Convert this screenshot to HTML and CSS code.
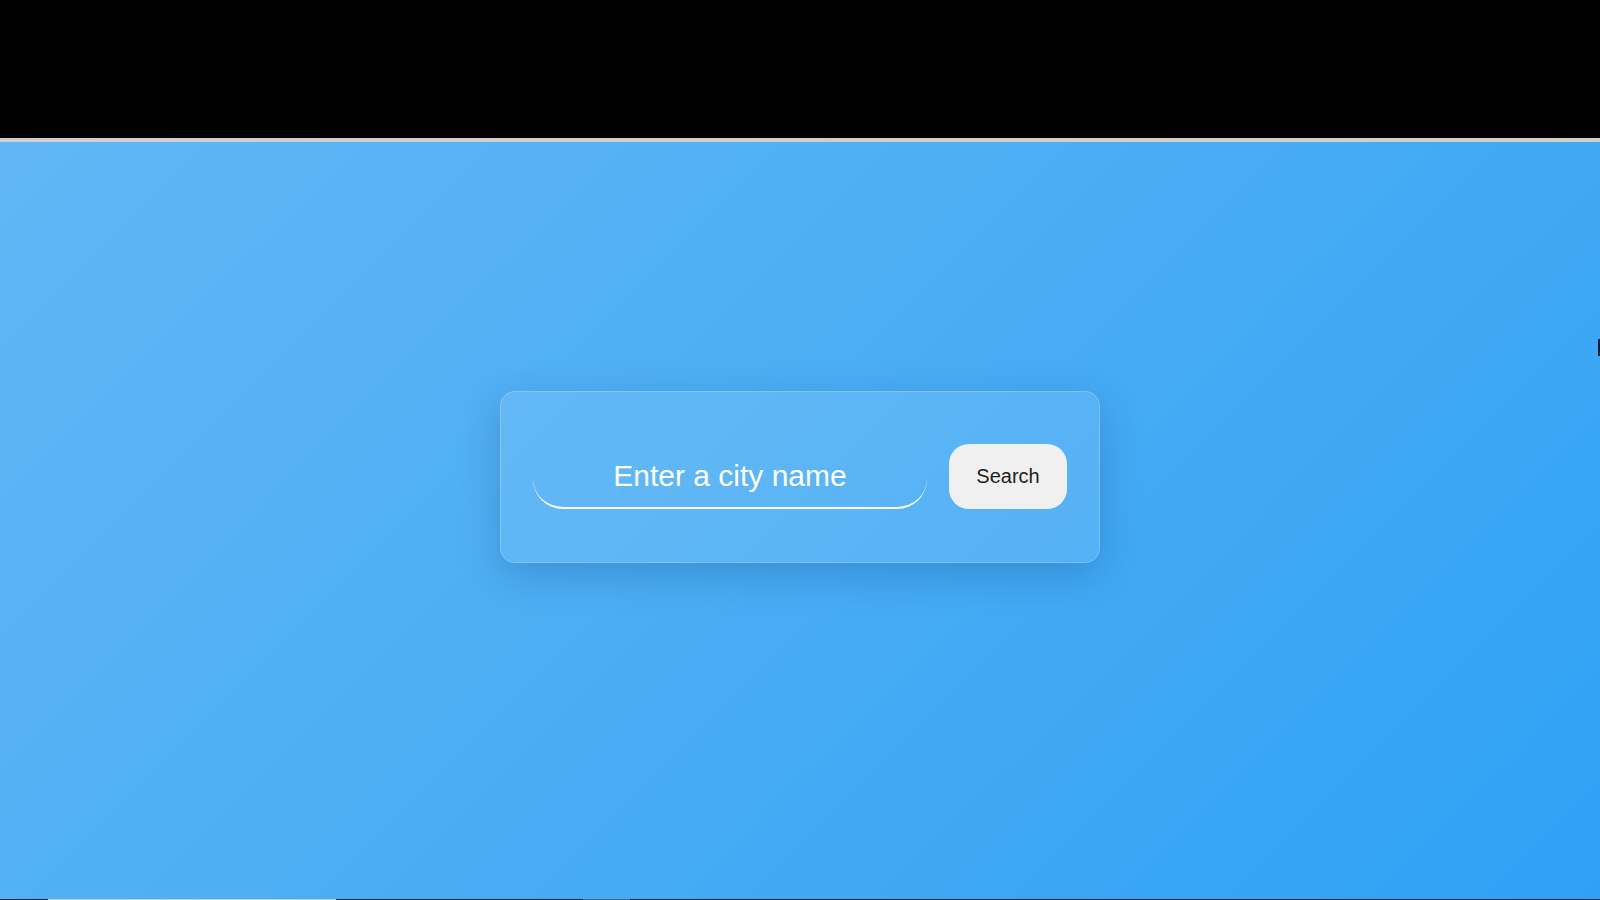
FILE: index.html
```html
<!DOCTYPE html>
<html lang="en">
<head>
<meta charset="utf-8">
<title>Weather</title>
<link rel="stylesheet" href="styles.css">
</head>
<body>
<div class="topbar"></div>
<div class="divider"></div>
<main class="main">
  <div class="card">
    <div class="search-row">
      <input class="city-input" type="text" placeholder="Enter a city name">
      <button class="search-btn">Search</button>
    </div>
  </div>
  <span class="edge-mark"></span>
</main>
<div class="bottom-strip">
  <span class="seg seg-dark1"></span>
  <span class="seg seg-light"></span>
  <span class="seg seg-dark2"></span>
  <span class="seg seg-grey"></span>
  <span class="seg seg-dark3"></span>
</div>
</body>
</html>
```
FILE: styles.css
```css
* { box-sizing: border-box; }
html, body { margin: 0; padding: 0; }
body {
  width: 1600px;
  height: 900px;
  overflow: hidden;
  display: flex;
  flex-direction: column;
  font-family: "Liberation Sans", Arial, sans-serif;
}
.topbar { height: 138px; background: #000; flex: none; }
.divider { height: 4px; background: #cfcfcf; flex: none; }
.main {
  position: relative;
  flex: 1;
  background: linear-gradient(135deg, #62b6f5 0%, #4caef4 45%, #2ea1f5 100%);
  display: flex;
  justify-content: center;
  align-items: flex-start;
  padding-top: 249px;
}
.card {
  width: 600px;
  height: 172px;
  border-radius: 15px;
  background: rgba(255, 255, 255, 0.1);
  border: 1px solid rgba(255, 255, 255, 0.2);
  box-shadow: 0 12px 40px rgba(0, 40, 100, 0.22);
  padding: 52px 32px 0 32px;
}
.search-row {
  display: flex;
  gap: 22px;
  height: 65px;
}
.city-input {
  width: 394px;
  height: 65px;
  border: none;
  border-bottom: 2px solid #fff;
  border-radius: 30px;
  background: transparent;
  outline: none;
  color: #fff;
  font-family: "Liberation Sans", Arial, sans-serif;
  font-size: 30px;
  text-align: center;
  padding: 0 10px;
}
.city-input::placeholder { color: #fff; opacity: 1; }
.search-btn {
  width: 118px;
  height: 65px;
  border: none;
  border-radius: 20px;
  background: #f0f0f0;
  color: #1e1e1e;
  font-family: "Liberation Sans", Arial, sans-serif;
  font-size: 20px;
  padding: 0;
}
.edge-mark {
  position: absolute;
  right: 0;
  top: 197px;
  width: 2px;
  height: 17px;
  background: #0d1a3a;
}
.bottom-strip { height: 1px; flex: none; display: flex; }
.seg { height: 1px; display: block; }
.seg-dark1 { width: 48px; background: #1a1f2b; }
.seg-light { width: 288px; background: #c8ccd2; }
.seg-dark2 { width: 247px; background: #1a1f2b; }
.seg-grey { width: 47px; background: #5b6270; }
.seg-dark3 { flex: 1; background: #1a1f2b; }
```
